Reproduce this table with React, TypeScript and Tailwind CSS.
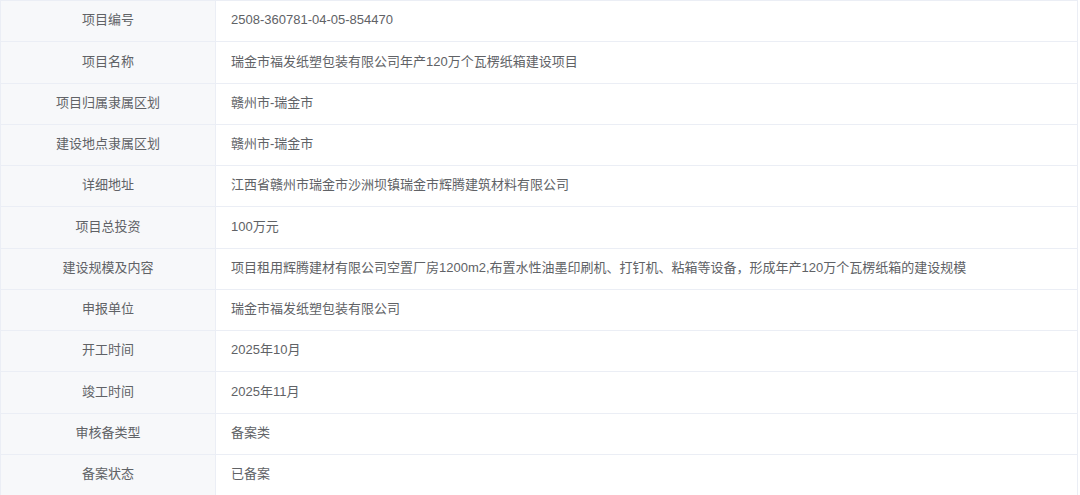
import React from "react";

interface InfoRow {
  label: string;
  value: string;
}

const rows: InfoRow[] = [
  { label: "项目编号", value: "2508-360781-04-05-854470" },
  { label: "项目名称", value: "瑞金市福发纸塑包装有限公司年产120万个瓦楞纸箱建设项目" },
  { label: "项目归属隶属区划", value: "赣州市-瑞金市" },
  { label: "建设地点隶属区划", value: "赣州市-瑞金市" },
  { label: "详细地址", value: "江西省赣州市瑞金市沙洲坝镇瑞金市辉腾建筑材料有限公司" },
  { label: "项目总投资", value: "100万元" },
  {
    label: "建设规模及内容",
    value:
      "项目租用辉腾建材有限公司空置厂房1200m2,布置水性油墨印刷机、打钉机、粘箱等设备，形成年产120万个瓦楞纸箱的建设规模",
  },
  { label: "申报单位", value: "瑞金市福发纸塑包装有限公司" },
  { label: "开工时间", value: "2025年10月" },
  { label: "竣工时间", value: "2025年11月" },
  { label: "审核备类型", value: "备案类" },
  { label: "备案状态", value: "已备案" },
];

const App: React.FC = () => {
  return (
    <div className="w-[1080px] h-[495px] bg-white overflow-hidden font-['Liberation_Sans','Noto_Sans_CJK_SC',sans-serif] text-[13px] text-[#606266]">
      <div className="w-[1078px] border-t border-l border-r border-[#ebeef5]">
        {rows.map((row) => (
          <div
            key={row.label}
            className="flex h-[41.25px] border-b border-[#ebeef5]"
          >
            {/* label column */}
            <div className="w-[215px] shrink-0 flex items-center justify-center pb-[2px] bg-[#f7f8fa] border-r border-[#ebeef5]">
              {row.label}
            </div>
            <div className="flex-1 flex items-center pl-[15px] pb-[2px] whitespace-nowrap">
              {row.value}
            </div>
          </div>
        ))}
      </div>
    </div>
  );
};

export default App;
